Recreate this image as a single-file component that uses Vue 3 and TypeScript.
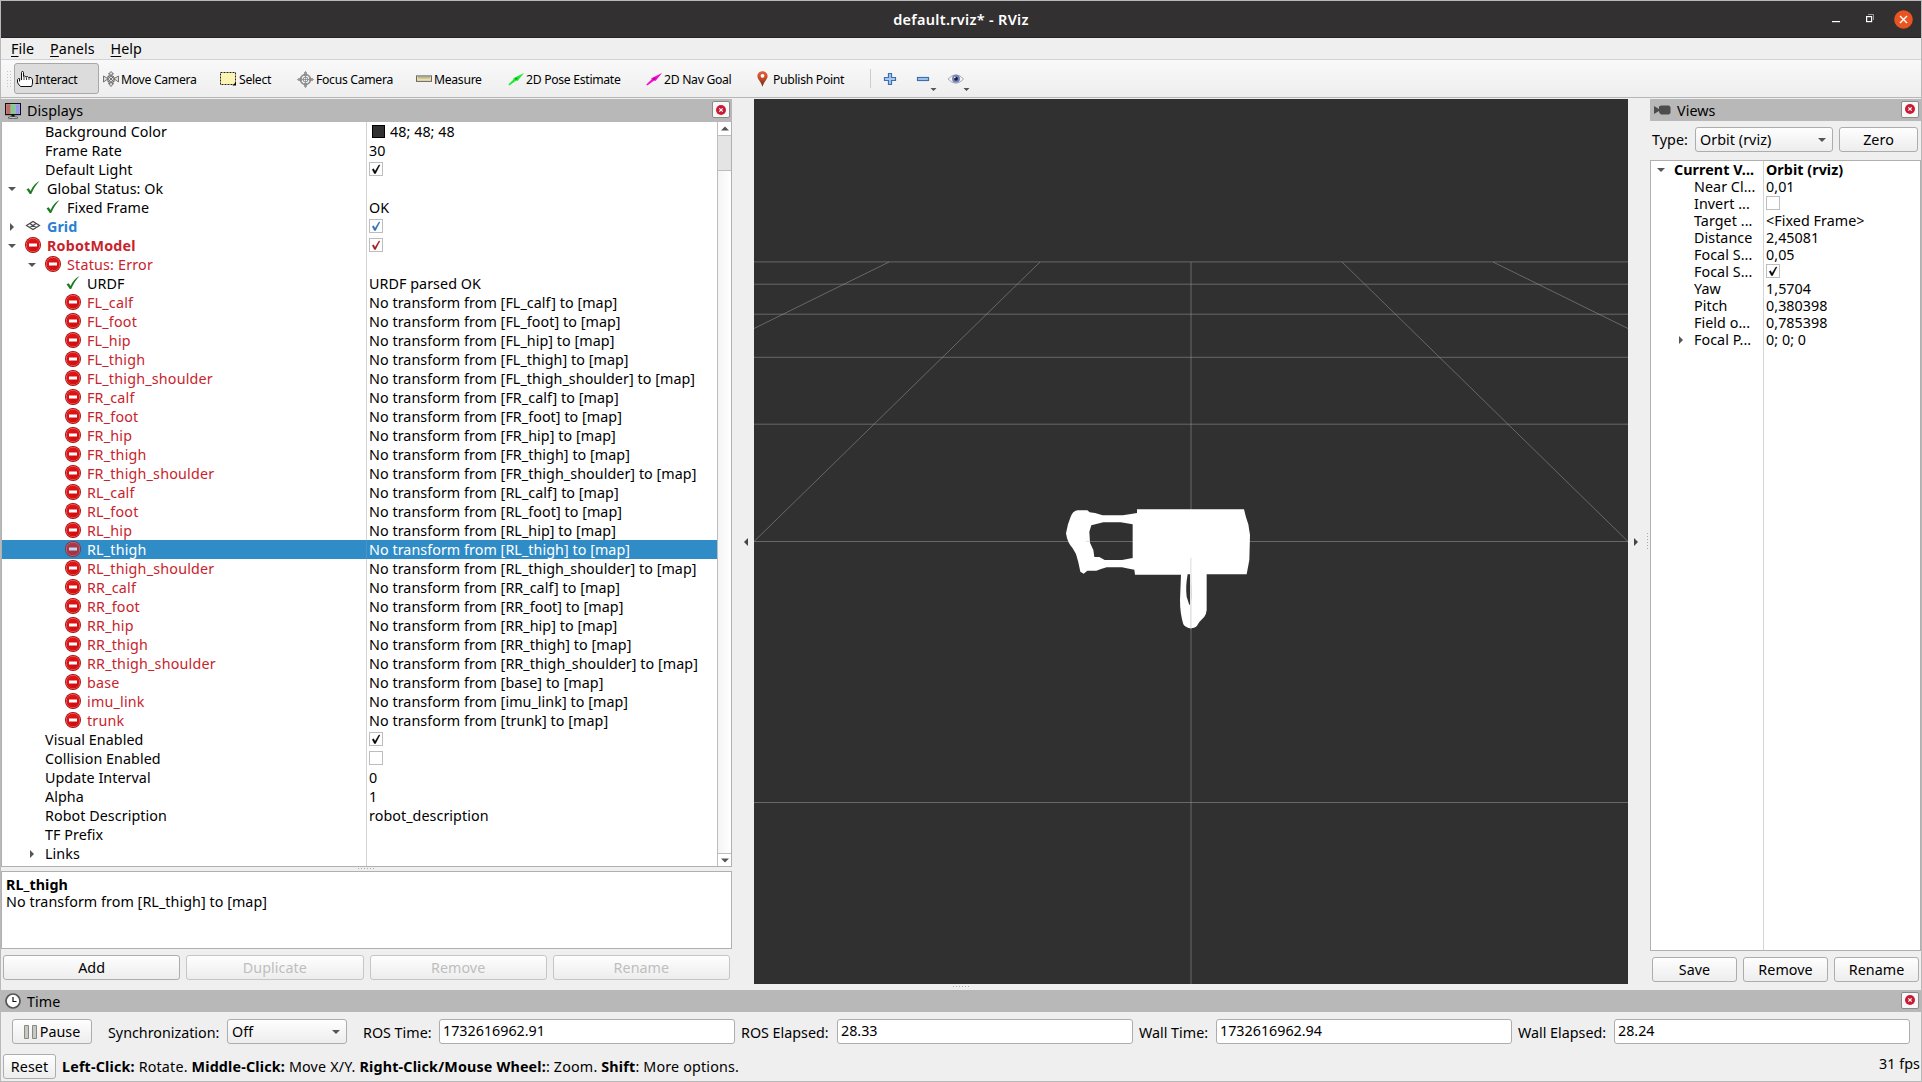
<script setup lang="ts">
interface Row {
  label: string
  level: number
  icon?: 'ok' | 'error' | 'grid'
  arrow?: 'open' | 'closed'
  tone?: 'red' | 'blue'
  bold?: boolean
  value?: string
  check?: 'on' | 'off'
  swatch?: boolean
  selected?: boolean
}

const links = [
  'FL_calf', 'FL_foot', 'FL_hip', 'FL_thigh', 'FL_thigh_shoulder',
  'FR_calf', 'FR_foot', 'FR_hip', 'FR_thigh', 'FR_thigh_shoulder',
  'RL_calf', 'RL_foot', 'RL_hip', 'RL_thigh', 'RL_thigh_shoulder',
  'RR_calf', 'RR_foot', 'RR_hip', 'RR_thigh', 'RR_thigh_shoulder',
  'base', 'imu_link', 'trunk',
]

const rows: Row[] = [
  { label: 'Background Color', level: 1, value: '48; 48; 48', swatch: true },
  { label: 'Frame Rate', level: 1, value: '30' },
  { label: 'Default Light', level: 1, check: 'on' },
  { label: 'Global Status: Ok', level: 0, icon: 'ok', arrow: 'open' },
  { label: 'Fixed Frame', level: 1, icon: 'ok', value: 'OK' },
  { label: 'Grid', level: 0, icon: 'grid', arrow: 'closed', tone: 'blue', bold: true, check: 'on' },
  { label: 'RobotModel', level: 0, icon: 'error', arrow: 'open', tone: 'red', bold: true, check: 'on' },
  { label: 'Status: Error', level: 1, icon: 'error', arrow: 'open', tone: 'red' },
  { label: 'URDF', level: 2, icon: 'ok', value: 'URDF parsed OK' },
  ...links.map((name): Row => ({
    label: name,
    level: 2,
    icon: 'error',
    tone: 'red',
    value: `No transform from [${name}] to [map]`,
    selected: name === 'RL_thigh',
  })),
  { label: 'Visual Enabled', level: 1, check: 'on' },
  { label: 'Collision Enabled', level: 1, check: 'off' },
  { label: 'Update Interval', level: 1, value: '0' },
  { label: 'Alpha', level: 1, value: '1' },
  { label: 'Robot Description', level: 1, value: 'robot_description' },
  { label: 'TF Prefix', level: 1 },
  { label: 'Links', level: 1, arrow: 'closed' },
]

const viewRows: Row[] = [
  { label: 'Current V...', level: 0, arrow: 'open', bold: true, value: 'Orbit (rviz)' },
  { label: 'Near Cl...', level: 1, value: '0,01' },
  { label: 'Invert ...', level: 1, check: 'off' },
  { label: 'Target ...', level: 1, value: '<Fixed Frame>' },
  { label: 'Distance', level: 1, value: '2,45081' },
  { label: 'Focal S...', level: 1, value: '0,05' },
  { label: 'Focal S...', level: 1, check: 'on' },
  { label: 'Yaw', level: 1, value: '1,5704' },
  { label: 'Pitch', level: 1, value: '0,380398' },
  { label: 'Field o...', level: 1, value: '0,785398' },
  { label: 'Focal P...', level: 1, arrow: 'closed', value: '0; 0; 0' },
]

const tools = [
  { id: 'interact', label: 'Interact', width: 85 },
  { id: 'move', label: 'Move Camera', width: 118 },
  { id: 'select', label: 'Select', width: 77 },
  { id: 'focus', label: 'Focus Camera', width: 119 },
  { id: 'measure', label: 'Measure', width: 91 },
  { id: 'pose', label: '2D Pose Estimate', width: 138 },
  { id: 'nav', label: '2D Nav Goal', width: 110 },
  { id: 'point', label: 'Publish Point', width: 114 },
]

const menus = ['File', 'Panels', 'Help']
const displayButtons = ['Add', 'Duplicate', 'Remove', 'Rename']
const viewButtons = ['Save', 'Remove', 'Rename']
const clocks = [
  { label: 'ROS Time:', value: '1732616962.91', width: 76 },
  { label: 'ROS Elapsed:', value: '28.33', width: 96 },
  { label: 'Wall Time:', value: '1732616962.94', width: 77 },
  { label: 'Wall Elapsed:', value: '28.24', width: 96 },
]
</script>

<template>
  <div class="window">
    <svg width="0" height="0" class="defs" aria-hidden="true">
      <defs>
        <radialGradient id="err" cx=".6" cy=".7" r=".7">
          <stop offset="0" stop-color="#cf0d0d" /><stop offset="1" stop-color="#e31519" />
        </radialGradient>
        <linearGradient id="pin" x1="0" y1="0" x2="0" y2="1">
          <stop offset="0" stop-color="#e8603a" /><stop offset=".5" stop-color="#c04a28" /><stop offset="1" stop-color="#4d2a10" />
        </linearGradient>
        <symbol id="i-ok" viewBox="0 0 16 16"><path d="M1.500 9.300 3.700 8.200 5.600 11C7.500 6.500 10.500 3 14.500 1 11 4.700 8.300 9 6.200 14H4.800Z" fill="#1f7a24" /></symbol>
        <symbol id="i-error" viewBox="0 0 16 16">
          <circle cx="8" cy="8" r="8" fill="#a80c0c" /><circle cx="8" cy="8" r="7.100" fill="#f08a80" /><circle cx="8" cy="8" r="6.600" fill="url(#err)" />
          <rect x="4" y="6.500" width="8" height="3" fill="#fff" />
        </symbol>
        <symbol id="i-grid" viewBox="0 0 16 16"><path d="M1.500 7.500 8 3.500 14.500 7.500 8 11.500ZM4.800 5.500 11.200 9.500M11.200 5.500 4.800 9.500" fill="none" stroke="#4a4a4a" stroke-width="1.200" /></symbol>
        <symbol id="i-check" viewBox="0 0 14 14"><path d="M3.300 7.600 4.600 6.800 6 9.600 9.800 3.200 10.900 3 6.500 11.500H5.400Z" fill="currentColor" stroke="currentColor" stroke-width=".5" /></symbol>
      </defs>
    </svg>

    <header class="titlebar">
      <span class="title">default.rviz* - RViz</span>
      <div class="wm">
        <svg class="min" width="8" height="16"><rect y="10" width="8" height="1.200" fill="#fff" /></svg>
        <svg class="max" width="8" height="10"><path d="M2 .5H7.500V6" fill="none" stroke="#999" /><rect x=".6" y="2.600" width="5" height="5" fill="none" stroke="#fff" stroke-width="1.200" /></svg>
        <svg width="19" height="19"><circle cx="9.500" cy="9.500" r="9.300" fill="#e95420" /><path d="m6 6 7 7m0-7-7 7" stroke="#fff" stroke-width="1.400" /></svg>
      </div>
    </header>

    <nav class="menubar">
      <span v-for="m in menus" :key="m" class="menu"><u>{{ m[0] }}</u>{{ m.slice(1) }}</span>
    </nav>

    <div class="toolbar">
      <div class="handle"></div>
      <button v-for="t in tools" :key="t.id" class="tool" :class="[t.id, { active: t.id === 'interact' }]" :style="{ width: t.width + 'px' }">
        <svg v-if="t.id === 'interact'" width="16" height="16" viewBox="0 0 16 16"><path d="M4.500 9V1.500Q4.500.5 5.500.5T6.500 1.500V5.500L7.500 5 9 6 10.500 5.500 11.500 6.700 13 6.300Q15.500 7 15.500 9V12Q15.500 13.500 14.500 15.500H3.500Q.5 12.500.5 11V8.500Q1.500 7 2.500 7.500V10.500" fill="#fff" stroke="#111" /><path d="M7 6v3M9.500 6.500V9M12 7v2" stroke="#111" stroke-width=".8" /></svg>
        <svg v-else-if="t.id === 'move'" width="16" height="16" viewBox="0 0 16 16" fill="#ddd" stroke="#666" stroke-width=".9"><path d="M5 5h4l2 1.500V11H5ZM8 .5 5.500 3H7V5H9V3h1.500ZM8 15.500 5.500 12.500H7V11H9v1.500h1.500ZM.5 5v6L4 8.500 5 9V7L4 7ZM15.500 5v6L12 8.500 11 9V7l1 0Z" /><path d="M5 5 11 11M11 5 5 11" /></svg>
        <svg v-else-if="t.id === 'select'" width="17" height="14" viewBox="0 0 17 14"><rect x=".5" y=".5" width="15" height="12" fill="#fcf4b0" stroke="#222" stroke-dasharray="2 1" /><path d="M16 10v3.500h-3.500Z" fill="#000" /></svg>
        <svg v-else-if="t.id === 'focus'" width="17" height="17" viewBox="0 0 17 17" fill="none" stroke="#888"><circle cx="8.500" cy="8.500" r="5" stroke-width="1.500" /><circle cx="8.500" cy="8.500" r="2.500" /><path d="M8.500 0V17M0 8.500H17M7.500 1v4M9.500 1v4M7.500 12v4M9.500 12v4M1 7.500h4M1 9.500h4M12 7.500h4M12 9.500h4" stroke-width=".8" /></svg>
        <svg v-else-if="t.id === 'measure'" width="16" height="8" viewBox="0 0 16 8"><rect x=".5" y=".9" width="15" height="5.500" fill="#e8e0a8" stroke="#666" /><path d="M3 1.500v2M5 1.500v2M7 1.500v2M9 1.500v2M11 1.500v2M13 1.500v2" stroke="#777" stroke-width=".8" /></svg>
        <svg v-else-if="t.id === 'pose' || t.id === 'nav'" width="16" height="13" viewBox="0 0 16 13" :fill="t.id === 'pose' ? '#1bea2d' : '#f20bd0'"><path d="M.3 11.500 5.500 6.600 5.300 5.200 16 0 9.500 8 8.200 7.500 1.300 12.600Z" /><path d="m7 5.500 2-1 .5 1.500-2 1Z" fill="#000" opacity=".35" /></svg>
        <svg v-else width="11" height="16" viewBox="0 0 11 16"><path d="M5.500.2C8.500.2 10.600 2.400 10.600 5 10.600 8.500 7 10.500 5.500 15.800 4 10.500.4 8.500.4 5 .4 2.400 2.500.2 5.500.2Z" fill="url(#pin)" /><circle cx="5.500" cy="4.800" r="1.900" fill="#fff" /></svg>
        <span>{{ t.label }}</span>
      </button>
      <i class="vsep"></i>
      <svg class="edit" width="110" height="26" viewBox="0 0 110 26">
        <path d="M12.500 7.500h3v4h4v3h-4v4h-3v-4h-4v-3h4Z" fill="#a9c9ee" stroke="#3a6fb0" stroke-width="1.200" />
        <rect x="41.500" y="11.500" width="11" height="3" fill="#a9c9ee" stroke="#3a6fb0" stroke-width="1.200" />
        <path d="M54.500 22h6l-3 3Z M87.500 22h6l-3 3Z" fill="#555" />
        <path d="M72 13Q80 4.500 87.500 13 80 21.500 72 13Z" fill="#f4f4f4" stroke="#aaa" />
        <circle cx="80" cy="12.800" r="4" fill="#7385bd" /><circle cx="80" cy="12.800" r="2" fill="#1c2140" /><circle cx="78.800" cy="11.500" r=".8" fill="#fff" />
      </svg>
    </div>

    <main class="main">
      <section class="displays">
        <div class="dock">
          <svg width="16" height="16" viewBox="0 0 16 16"><rect x=".6" y=".6" width="14.800" height="11" fill="#fff" stroke="#111" stroke-width="1.200" /><rect x="1.200" y="1.200" width="4.600" height="9.800" fill="#bf6a6a" /><rect x="5.800" y="1.200" width="4.400" height="9.800" fill="#82cf82" /><rect x="10.200" y="1.200" width="4.600" height="9.800" fill="#9898ea" /><path d="M6.500 12h3v2h-3Z" fill="#111" /><ellipse cx="8" cy="14.700" rx="5" ry="1" fill="#ddd" stroke="#333" stroke-width=".7" /></svg>
          <span>Displays</span>
          <b class="x"><svg width="10" height="10"><circle cx="5" cy="5" r="5" fill="#cb1b34" /><path d="m3.300 3.300 3.400 3.400m0-3.400L3.300 6.700" stroke="#fff" stroke-width="1.200" /></svg></b>
        </div>
        <div class="tree">
          <div class="rows">
            <div v-for="r in rows" :key="r.label" class="row" :class="[r.tone, { selected: r.selected }]">
              <div class="name" :class="{ bold: r.bold }" :style="{ paddingLeft: r.level * 20 + 'px' }">
                <span class="branch"><i v-if="r.arrow" :class="r.arrow"></i></span>
                <svg v-if="r.icon" class="ico" width="16" height="16"><use :href="'#i-' + r.icon" /></svg>
                <span>{{ r.label }}</span>
              </div>
              <div class="value">
                <i v-if="r.swatch" class="swatch"></i>
                <i v-if="r.check" class="check"><svg v-if="r.check === 'on'" width="14" height="14"><use href="#i-check" /></svg></i>
                <span>{{ r.value }}</span>
              </div>
            </div>
            <div class="row rest"><div class="name"></div></div>
          </div>
          <div class="scroll">
            <div class="sbtn"><svg width="8" height="5"><path d="M0 4.500 4 .5 8 4.500Z" fill="#555" /></svg></div>
            <div class="thumb"></div>
            <div class="track"></div>
            <div class="sbtn down"><svg width="8" height="5"><path d="M0 .5H8L4 4.500Z" fill="#555" /></svg></div>
          </div>
        </div>
        <div class="split"><i class="dots"></i></div>
        <div class="desc"><b>RL_thigh</b><span>No transform from [RL_thigh] to [map]</span></div>
        <div class="buttons">
          <button v-for="(b, i) in displayButtons" :key="b" class="btn" :disabled="i > 0">{{ b }}</button>
        </div>
      </section>

      <div class="gutter left"><svg width="4" height="8"><path d="M4 0V8L0 4Z" fill="#444" /></svg></div>

      <svg class="view" width="874" height="885" viewBox="754 99 874 885">
        <rect x="754" y="99" width="874" height="885" fill="#303030" />
        <g stroke="#a0a0a0" stroke-opacity=".5" fill="none" stroke-width="1">
          <path d="M754 261.900H1628M754 284.200H1628M754 314.200H1628M754 357.300H1628M754 424.200H1628M754 541.500H1628M754 802.500H1628" />
          <path d="M1191 262V984M889 262 754 328.500M1040 262 754 541.500M1342 262 1628 541.500M1493 262 1628 328.500" />
        </g>
        <g transform="translate(1040 480) scale(.33333)">
          <path fill="#fff" fill-rule="evenodd" d="M78 160 84 133 92 110Q98 94 112 91H142L149 97 165 99 188 106H248L273 102 291 99V88H612L618 112 625 133 630 165 628 240 620 283H500V390Q499 402 493 410L478 426 470 439Q464 445 452 445 438 444 430 433 420 400 420 360L423 284H285L283 269 260 265 246 262H200L183 267 169 272H142L131 281 121 275 115 247 108 222 98 205Q82 188 78 160ZM190 127 154 136 148 155 150 188 160 210 163 231H178L194 240H246L278 234V133L242 127ZM443 283Q436 320 440 350L448 375Q455 372 454 340 454 300 450 283Z" />
          <path d="M138 184H150M452.500 233V284" stroke="#e4e4e4" stroke-width="4" /><path d="M452.500 284V445" stroke="#e4e4e4" stroke-width="5" />
        </g>
      </svg>

      <div class="gutter right"><svg width="4" height="8"><path d="M0 0V8L4 4Z" fill="#444" /></svg><i class="vdots"></i></div>

      <section class="views">
        <div class="dock">
          <svg width="17" height="10" viewBox="0 0 17 10"><path d="M0 1 5 4V1.500Q6 .5 8 .5H15L16.500 2V8L15 9.500H7Q5 9 5 6L0 9Z" fill="#4c4c4c" /></svg>
          <span>Views</span>
          <b class="x"><svg width="10" height="10"><circle cx="5" cy="5" r="5" fill="#cb1b34" /><path d="m3.300 3.300 3.400 3.400m0-3.400L3.300 6.700" stroke="#fff" stroke-width="1.200" /></svg></b>
        </div>
        <div class="type">
          <label>Type:</label>
          <div class="combo"><span>Orbit (rviz)</span><i class="open"></i></div>
          <button class="btn">Zero</button>
        </div>
        <div class="vtree">
          <div v-for="(r, i) in viewRows" :key="i" class="row" :class="{ bold: r.bold }">
            <div class="name" :style="{ paddingLeft: r.level * 20 + 'px' }">
              <span class="branch"><i v-if="r.arrow" :class="r.arrow"></i></span>
              <span>{{ r.label }}</span>
            </div>
            <div class="value">
              <i v-if="r.check" class="check"><svg v-if="r.check === 'on'" width="14" height="14"><use href="#i-check" /></svg></i>
              <span>{{ r.value }}</span>
            </div>
          </div>
          <div class="row rest"><div class="name"></div></div>
        </div>
        <div class="buttons">
          <button v-for="b in viewButtons" :key="b" class="btn">{{ b }}</button>
        </div>
      </section>
    </main>

    <div class="hsplit"><i class="dots"></i></div>

    <div class="dock time">
      <svg width="16" height="16"><circle cx="8" cy="8" r="7" fill="#fff" stroke="#555" stroke-width="1.700" /><path d="M8 4V8.500H11.500" fill="none" stroke="#111" stroke-width="1.200" /></svg>
      <span>Time</span>
      <b class="x"><svg width="10" height="10"><circle cx="5" cy="5" r="5" fill="#cb1b34" /><path d="m3.300 3.300 3.400 3.400m0-3.400L3.300 6.700" stroke="#fff" stroke-width="1.200" /></svg></b>
    </div>

    <div class="clock">
      <button class="btn pause"><svg width="14" height="14"><path d="M.5.5h4v13h-4ZM8.500.5h4v13h-4Z" fill="#c6c8c2" stroke="#888a85" /></svg>Pause</button>
      <label class="sync">Synchronization:</label>
      <div class="combo"><span>Off</span><i class="open"></i></div>
      <template v-for="c in clocks" :key="c.label">
        <label class="clabel" :style="{ width: c.width + 'px' }">{{ c.label }}</label>
        <div class="field">{{ c.value }}</div>
      </template>
    </div>

    <footer class="status">
      <button class="btn reset">Reset</button>
      <p><b>Left-Click:</b> Rotate. <b>Middle-Click:</b> Move X/Y. <b>Right-Click/Mouse Wheel:</b>: Zoom. <b>Shift</b>: More options.</p>
      <span class="fps">31 fps</span>
    </footer>
  </div>
</template>

<style>
body {
  background: #efefef;
}
</style>

<style scoped>
* {
  box-sizing: border-box;
}
.window {
  width: 1922px;
  height: 1082px;
  border: 1px solid #b9b9b9;
  background: #efefef;
  color: #000;
  font: 14.3px/19px "Noto Sans", "Open Sans", sans-serif;
  letter-spacing: 0.06px;
  display: flex;
  flex-direction: column;
  overflow: hidden;
  white-space: nowrap;
}
.defs {
  position: absolute;
}
svg {
  flex: none;
}
button {
  font: inherit;
  color: inherit;
  letter-spacing: inherit;
  padding: 0;
  margin: 0;
}
.titlebar {
  flex: none;
  height: 37px;
  background: #333031;
  border-bottom: 1px solid #262324;
  color: #fff;
  display: grid;
  grid-template-columns: 1fr auto 1fr;
  align-items: center;
}
.title {
  grid-column: 2;
  font-weight: 600;
  font-size: 14.5px;
  letter-spacing: 0.3px;
}
.wm {
  justify-self: end;
  display: flex;
  align-items: center;
  padding-right: 8px;
}
.min {
  margin-right: 26px;
}
.max {
  margin-right: 20px;
}
.menubar {
  flex: none;
  height: 22px;
  border-bottom: 1px solid #d3d3d3;
  display: flex;
  gap: 16px;
  padding-left: 10px;
  line-height: 21px;
}
.menu u {
  text-underline-offset: 2px;
}
.toolbar {
  flex: none;
  height: 38px;
  border-bottom: 1px solid #b6b6b6;
  background: linear-gradient(#f9f9f9, #eee);
  display: flex;
  align-items: center;
  padding-left: 5px;
  font-size: 12.2px;
  letter-spacing: -0.3px;
}
.handle {
  width: 5px;
  height: 17px;
  margin-right: 3px;
  background: radial-gradient(circle, #c4c4c4 0.7px, transparent 1px) 0 0 / 3px 3px;
}
.tool {
  height: 31px;
  border: 1px solid transparent;
  border-radius: 3px;
  background: none;
  display: flex;
  align-items: center;
  padding: 1px 0 0 2px;
  gap: 2px;
}
.tool.move {
  padding-left: 3px;
}
.tool.pose,
.tool.nav {
  padding-left: 3px;
  gap: 2px;
}
.tool.point {
  padding-left: 4px;
  gap: 5px;
}
.tool.active {
  border-color: #a8a8a8;
  background: #dcdcdc;
}
.vsep {
  width: 1px;
  height: 19px;
  background: #ccc;
  margin-left: 4px;
}
.edit {
  margin-left: 5px;
}
.main {
  flex: none;
  height: 885px;
  margin-top: 1px;
  display: flex;
}
.displays {
  width: 731px;
}
.dock {
  height: 23px;
  background: #b8b8b8;
  display: flex;
  align-items: center;
  padding: 0 2px 0 4px;
}
.views .dock {
  height: 22px;
}
.dock span {
  margin-left: 6px;
  flex: 1;
}
.x {
  width: 18px;
  height: 17px;
  border: 1px solid #8a8a8a;
  border-radius: 2px;
  background: #f8f8f8;
  display: flex;
  align-items: center;
  justify-content: center;
  margin-top: -2px;
}
.tree {
  height: 745px;
  border: 1px solid #b0b0b0;
  border-top: 0;
  background: #fff;
  display: flex;
}
.rows {
  flex: 1;
}
.row {
  height: 19px;
  display: flex;
}
.row.rest {
  height: 3px;
}
.name {
  width: 365px;
  border-right: 1px solid #d4d4d4;
  display: flex;
  align-items: center;
}
.bold {
  font-weight: 700;
}
.branch {
  width: 20px;
  margin-right: 3px;
  display: flex;
  justify-content: center;
}
.ico {
  margin-right: 6px;
  margin-top: -1px;
}
.open {
  border: 4px solid transparent;
  border-top-color: #555;
  border-bottom: 0;
}
.closed {
  border: 4px solid transparent;
  border-left-color: #555;
  border-right: 0;
}
.value {
  display: flex;
  align-items: center;
  padding-left: 2px;
}
.swatch {
  width: 13px;
  height: 13px;
  border: 1px solid #000;
  background: #303030;
  margin: 0 5px 0 3px;
}
.check {
  width: 14px;
  height: 14px;
  border: 1px solid #bdbdbd;
  background: #fff;
  display: flex;
  margin-top: -1px;
}
.check svg {
  margin: -1px;
}
.red .name {
  color: #c8232c;
  letter-spacing: 0.2px;
}
.red .check {
  color: #a01c1c;
}
.blue .name {
  color: #2a7fd0;
}
.blue .check {
  color: #2a6fb5;
}
.selected {
  background: #308cc6;
}
.selected .name,
.selected .value {
  color: #fff;
}
.selected .name {
  border-color: #4c93bf;
}
.selected .ico {
  opacity: 0.7;
}
.scroll {
  width: 14px;
  border-left: 1px solid #bdbdbd;
  display: flex;
  flex-direction: column;
}
.sbtn {
  height: 13px;
  display: flex;
  align-items: center;
  justify-content: center;
}
.sbtn.down {
  border-top: 1px solid #bdbdbd;
}
.thumb {
  height: 36px;
  background: #e4e4e4;
  border-top: 1px solid #bdbdbd;
  border-bottom: 1px solid #bdbdbd;
}
.track {
  flex: 1;
  background: linear-gradient(90deg, #f4f4f4, #fff);
}
.split {
  height: 4px;
  display: flex;
  justify-content: center;
  padding-top: 1px;
}
.dots {
  width: 17px;
  height: 1px;
  background: repeating-linear-gradient(90deg, #aaa 0 1px, transparent 1px 3px);
}
.desc {
  height: 78px;
  border: 1px solid #b0b0b0;
  background: #fff;
  padding: 4px;
  display: flex;
  flex-direction: column;
  line-height: 17px;
}
.buttons {
  display: flex;
  gap: 6px;
  padding: 6px 2px 0;
}
.btn {
  height: 25px;
  flex: 1;
  border: 1px solid #adadad;
  border-radius: 3px;
  background: linear-gradient(#fefefe, #ededed);
}
.btn:disabled {
  color: #bebebe;
  border-color: #c6c6c6;
}
.gutter {
  width: 22px;
  display: flex;
  align-items: center;
}
.left {
  justify-content: flex-end;
  padding-right: 6px;
}
.right {
  padding-left: 6px;
}
.vdots {
  width: 1px;
  height: 17px;
  margin-left: 9px;
  background: repeating-linear-gradient(#aaa 0 1px, transparent 1px 3px);
}
.views {
  width: 271px;
}
.type {
  height: 37px;
  margin-bottom: 2px;
  display: flex;
  align-items: center;
  padding: 0 3px 0 2px;
}
.type label {
  width: 43px;
}
.combo {
  height: 25px;
  width: 138px;
  border: 1px solid #adadad;
  border-radius: 3px;
  background: linear-gradient(#fefefe, #ededed);
  display: flex;
  align-items: center;
  justify-content: space-between;
  padding: 0 6px 0 4px;
}
.type .btn {
  margin-left: 6px;
}
.vtree {
  height: 791px;
  border: 1px solid #b0b0b0;
  background: #fff;
  display: flex;
  flex-direction: column;
}
.vtree .row {
  flex: none;
  height: 17px;
}
.vtree .row.rest {
  flex: 1;
}
.vtree .name {
  width: 113px;
}
.hsplit {
  flex: none;
  height: 6px;
  display: flex;
  justify-content: center;
  padding-top: 2px;
}
.time {
  flex: none;
  height: 22px;
  padding-right: 2px;
}
.clock {
  flex: none;
  height: 39px;
  display: flex;
  align-items: center;
  padding: 0 11px;
  letter-spacing: 0;
}
.pause {
  flex: none;
  width: 80px;
  display: flex;
  align-items: center;
  justify-content: center;
  gap: 2px;
}
.sync {
  width: 119px;
  margin-left: 16px;
  padding-top: 2px;
}
.clock .combo {
  width: 120px;
  margin-right: 10px;
}
.clabel {
  padding: 2px 0 0 6px;
  box-sizing: content-box;
}
.field {
  flex: 1;
  height: 25px;
  border: 1px solid #adadad;
  border-radius: 3px;
  background: #fff;
  padding-left: 3px;
  line-height: 22px;
}
.status {
  flex: 1;
  display: flex;
  align-items: center;
  padding: 0 1px 0 2px;
}
.reset {
  flex: none;
  width: 53px;
}
.status p {
  margin: 0 0 0 6px;
  flex: 1;
  letter-spacing: 0.175px;
}
.fps {
  margin-top: -6px;
}
</style>
